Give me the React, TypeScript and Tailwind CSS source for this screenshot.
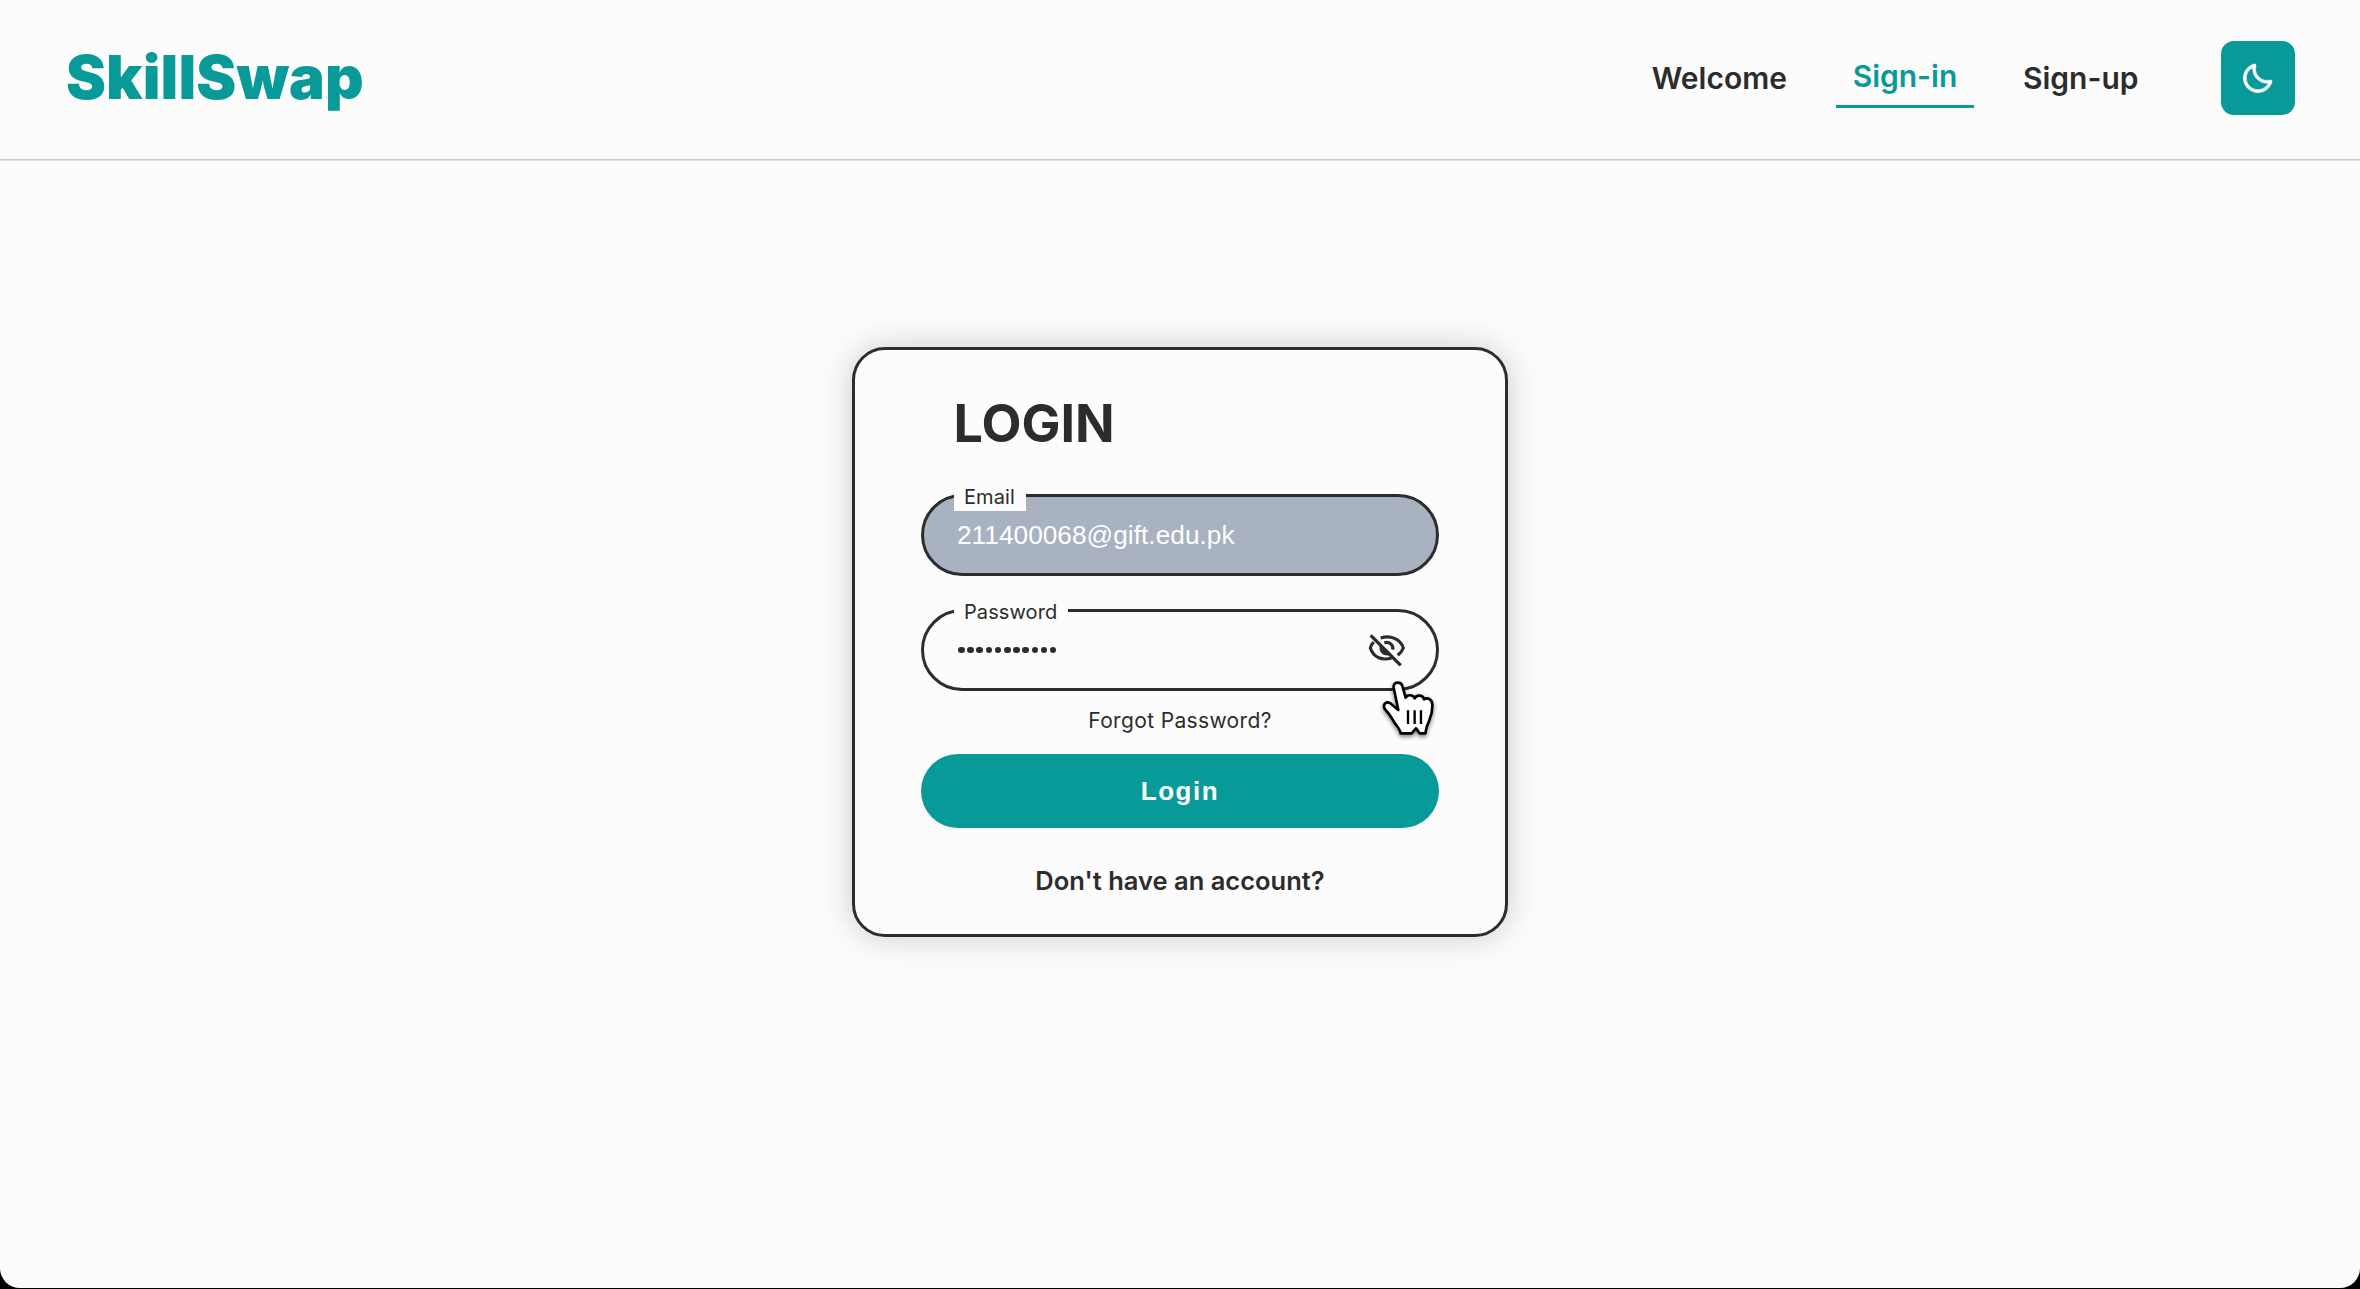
import { BiMoon } from "react-icons/bi";

const ink = "text-[#2c2c2c]";

function Header() {
  return (
    <header className="flex h-[160px] shrink-0 items-start justify-between border-b border-[#cbcbcb] pr-[65.500px] pl-[66px] shadow-[0_1px_1px_rgba(0,0,0,0.1)]">
      <h1 className="mt-[40px] text-[60px] leading-[74px] font-black tracking-[0.15px] text-[#089999]">
        SkillSwap
      </h1>
      <nav className="mt-[41px] flex items-start text-[30px] leading-[38px] font-semibold">
        <a className="mt-[18px] mr-[49px]">Welcome</a>
        <a className="mr-[49px] flex h-[67px] w-[138px] justify-center border-b-[3px] border-[#089999] pt-[16px] text-[#089999]">
          Sign-in
        </a>
        <a className="mt-[18px] mr-[82px]">Sign-up</a>
        <button className="flex size-[74px] items-center justify-center rounded-[13px] bg-[#089999] text-white">
          <BiMoon className="size-[35px] stroke-white [stroke-width:0.4px]" />
        </button>
      </nav>
    </header>
  );
}

function HiddenEye() {
  return (
    <svg
      viewBox="560 160 120 110"
      className="h-[36.700px] w-[40px]"
      fill="none"
      stroke="#2c2c2c"
      strokeWidth="9.500"
    >
      <path d="M571 170L661 260" strokeWidth="10" />
      <path d="M601 178C630 169 660 180 669 208C666 216 660 224 652 230" />
      <path d="M580 190C574 196 571 202 570 208C580 238 606 246 634 238" />
      <path d="M612 192C629 188 640 200 637 213" />
      <path d="M600 195L632 228C612 237 590 220 600 195Z" fill="#2c2c2c" stroke="none" />
    </svg>
  );
}

function PointerCursor() {
  return (
    <svg
      viewBox="600 295 175 190"
      className="absolute top-[66px] left-[456px] h-[63.300px] w-[58.300px] drop-shadow-[0_2px_2px_rgba(0,0,0,0.5)]"
    >
      <path
        d="M641 324C639 304 664 304 668 322L677 354C682 343 701 345 704 356C710 344 730 346 732 359C744 352 756 360 757 374C758 390 754 408 748 422C741 436 738 444 736 461L719 461L708 446L695 461L662 461C661 449 650 439 642 427C634 413 629 403 617 391C605 377 617 363 631 371L655 391Z"
        fill="white"
        stroke="black"
        strokeWidth="8"
        strokeLinejoin="round"
      />
      <path d="M684 392V433M704 392V433M723 392V433" stroke="black" strokeWidth="7" />
    </svg>
  );
}

function FieldLabel({ children }: { children: string }) {
  return (
    <span className="absolute top-[-14px] left-[30px] bg-[#fcfcfc] pr-[11px] pl-[10px] text-[20px] leading-[28px] tracking-[0.100px]">
      {children}
    </span>
  );
}

export default function App() {
  return (
    <div className="h-[1289px] bg-black font-['Inter',sans-serif]">
      <div className={`flex h-[1288px] flex-col rounded-b-[20px] bg-[#fcfcfc] ${ink}`}>
        <Header />
        <main className="flex justify-center pt-[187px]">
          <form className="flex h-[590px] w-[656px] flex-col rounded-[33px] border-[3px] border-[#2c2c2c] px-[66px] shadow-[0_0_33px_rgba(0,0,0,0.2)]">
            <h2 className="mt-[42px] ml-[32.500px] text-[52px] leading-[64px] font-bold">LOGIN</h2>
            <div className="relative mt-[38px] flex h-[82px] shrink-0 items-center rounded-full border-[3px] border-[#2c2c2c] bg-[#a9b2c1] pt-[2px] pl-[33px] font-['Liberation_Sans',sans-serif] text-[26.200px] tracking-[0.050px] text-white">
              211400068@gift.edu.pk
              <span className={`font-['Inter',sans-serif] ${ink}`}>
                <FieldLabel>Email</FieldLabel>
              </span>
            </div>
            <div className="relative mt-[33px] flex h-[82px] shrink-0 items-center justify-between rounded-full border-[3px] border-[#2c2c2c] pr-[29px] pl-[34px]">
              <div className="flex gap-[2.600px]">
                {Array.from({ length: 11 }, (_, i) => (
                  <span key={i} className="size-[6.600px] rounded-full bg-[#2c2c2c]" />
                ))}
              </div>
              <HiddenEye />
              <FieldLabel>Password</FieldLabel>
              <PointerCursor />
            </div>
            <a className="mt-[16px] self-center text-[21px] leading-[28px] tracking-[0.350px]">
              Forgot Password?
            </a>
            <button className="mt-[19px] h-[74px] shrink-0 rounded-full bg-[#089999] font-['Liberation_Sans',sans-serif] text-[26px] font-bold tracking-[1.500px] text-white">
              Login
            </button>
            <a className="mt-[37px] self-center text-[25.500px] leading-[32px] font-semibold">
              Don't have an account?
            </a>
          </form>
        </main>
      </div>
    </div>
  );
}
